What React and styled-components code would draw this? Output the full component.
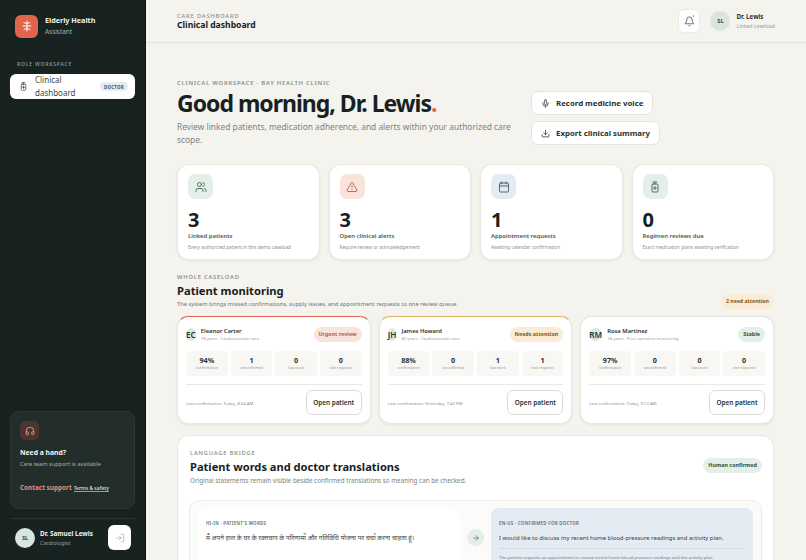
import styled, { createGlobalStyle } from 'styled-components'
import { ArrowRight, Bell, Calendar, Download, Headphones, LogIn, Mic, TriangleAlert, Users } from 'lucide-react'

const GlobalStyle = createGlobalStyle`
    html, body {
        margin: 0;
        height: 100%;
        overflow: hidden;
        background: #f5f3ee;
    }
    * {
        box-sizing: border-box;
    }
    body {
        font-family: "Noto Sans", "Open Sans", sans-serif;
        color: #17211f;
    }
`

const Shell = styled.div`
    display: flex;
    width: 806px;
    height: 560px;
    overflow: hidden;
`

const Sidebar = styled.aside`
    flex: 0 0 146px;
    height: 560px;
    background: #182220;
    border-right: 1px solid #0f1514;
    display: flex;
    flex-direction: column;
    padding: 14px 10px 0;
`

const Brand = styled.div`
    display: flex;
    align-items: center;
    gap: 7px;
    padding-left: 5px;
    height: 24px;
`

const BrandMark = styled.div`
    width: 23px;
    height: 23px;
    border-radius: 6px;
    background: #e0654a;
    display: flex;
    align-items: center;
    justify-content: center;
`

const BrandName = styled.div`
    font-size: 7.2px;
    font-weight: 700;
    line-height: 11px;
    color: #f5f3ee;
`

const BrandSub = styled.div`
    font-size: 6.4px;
    line-height: 11px;
    color: #a4aeab;
`

const NavLabel = styled.div`
    margin: 22px 0 0 7px;
    font-size: 5px;
    font-weight: 600;
    letter-spacing: 0.8px;
    line-height: 8px;
    color: #87928f;
`

const NavItem = styled.div`
    margin-top: 6px;
    height: 25px;
    background: #fff;
    border-radius: 6px;
    display: flex;
    align-items: center;
    padding: 0 7px 0 9px;
    color: #3b4644;
`

const NavText = styled.span`
    margin-left: 7px;
    width: 55px;
    font-size: 8px;
    line-height: 12.4px;
`

const RoleTag = styled.span`
    margin-left: auto;
    background: #e4ebf2;
    border-radius: 5px;
    padding: 1.500px 4px;
    font-size: 4.4px;
    font-weight: 700;
    letter-spacing: 0.3px;
    line-height: 6px;
    color: #3c5168;
`

const SupportCard = styled.div`
    margin-top: auto;
    height: 98px;
    background: #232e2b;
    border: 1px solid #2c3734;
    border-radius: 9px;
    padding: 9px 9px 0;
`

const SupportIcon = styled.div`
    width: 19px;
    height: 19px;
    border-radius: 5px;
    background: #4b3530;
    display: flex;
    align-items: center;
    justify-content: center;
    color: #e9a18f;
`

const SupportTitle = styled.div`
    margin-top: 7px;
    font-size: 6.8px;
    font-weight: 700;
    line-height: 11px;
    color: #f5f3ee;
`

const SupportText = styled.div`
    margin-top: 2px;
    font-size: 5.7px;
    line-height: 9px;
    color: #a4aeab;
`

const SupportLinks = styled.div`
    margin-top: 14px;
    display: flex;
    align-items: baseline;
    gap: 2px;
    white-space: nowrap;
`

const ContactLink = styled.span`
    font-size: 6.4px;
    font-weight: 700;
    color: #ee8a72;
`

const TermsLink = styled.span`
    font-size: 4.900px;
    font-weight: 600;
    color: #cfdad5;
    border-bottom: 1px solid #8fa39c;
`

const ProfileRow = styled.div`
    margin-top: 9px;
    border-top: 1px solid #2a3532;
    flex: 0 0 42px;
    display: flex;
    align-items: center;
    padding: 0 4px 4px 5px;
    gap: 5px;
`

const Avatar = styled.div`
    flex: 0 0 auto;
    width: ${(props) => props.$size}px;
    height: ${(props) => props.$size}px;
    border-radius: 50%;
    background: #d9e6de;
    color: #2c4a3f;
    display: flex;
    align-items: center;
    justify-content: center;
    font-size: 5.6px;
    font-weight: 700;
`

const ProfileText = styled.div`
    flex: 1;
    min-width: 0;
    white-space: nowrap;
`

const ProfileName = styled.div`
    font-size: 6.4px;
    font-weight: 700;
    line-height: 10px;
    color: #f5f3ee;
`

const ProfileRole = styled.div`
    font-size: 5.4px;
    line-height: 8px;
    color: #94a09c;
`

const SignOut = styled.div`
    flex: 0 0 23px;
    height: 25px;
    border-radius: 6px;
    background: #fff;
    color: #9aa5a1;
    display: flex;
    align-items: center;
    justify-content: center;
`

const Main = styled.main`
    flex: 1;
    min-width: 0;
    height: 560px;
    overflow: hidden;
`

const TopBar = styled.header`
    height: 43px;
    border-bottom: 1px solid #e2e1dc;
    display: flex;
    align-items: center;
    padding: 0 31px 0 31px;
`

const TopTitles = styled.div`
    flex: 1;
`

const TopEyebrow = styled.div`
    font-size: 5.8px;
    font-weight: 500;
    letter-spacing: 0.8px;
    line-height: 8px;
    color: #87908d;
`

const TopTitle = styled.div`
    font-size: 8.6px;
    font-weight: 700;
    line-height: 11px;
    color: #17211f;
`

const BellButton = styled.div`
    position: relative;
    width: 22px;
    height: 24px;
    border-radius: 6px;
    background: #fff;
    border: 1px solid #ecebe6;
    display: flex;
    align-items: center;
    justify-content: center;
    margin-right: 10px;
    color: #33403d;
`

const BellDot = styled.span`
    position: absolute;
    top: 5px;
    right: 5px;
    width: 1.500px;
    height: 1.500px;
    border-radius: 50%;
    background: #8a9290;
`

const TopUser = styled.div`
    display: flex;
    align-items: center;
    gap: 6px;
`

const TopUserName = styled.div`
    font-size: 6.2px;
    font-weight: 700;
    line-height: 10px;
    color: #27322f;
`

const TopUserSub = styled.div`
    font-size: 5.15px;
    line-height: 8px;
    color: #959e9b;
    white-space: nowrap;
`

const Content = styled.div`
    padding: 36px 32px 0 31px;
`

const Hero = styled.section`
    display: flex;
`

const HeroText = styled.div`
    flex: 0 0 354px;
`

const HeroEyebrow = styled.div`
    font-size: 5.9px;
    font-weight: 600;
    letter-spacing: 0.75px;
    line-height: 9px;
    color: #87908d;
`

const HeroTitle = styled.h1`
    margin: 0;
    font-size: 23px;
    font-weight: 700;
    letter-spacing: -1px;
    line-height: 30px;
    color: #17211f;
`

const HeroDot = styled.span`
    color: #e0654a;
`

const HeroLead = styled.p`
    margin: 2px 0 0;
    font-size: 8.4px;
    line-height: 13.2px;
    color: #7b8380;
`

const HeroActions = styled.div`
    margin-top: 12px;
    display: flex;
    flex-direction: column;
    align-items: flex-start;
    gap: 6px;
`

const ActionButton = styled.div`
    height: 24px;
    background: #fff;
    border: 1px solid #e5e3dd;
    border-radius: 7px;
    padding: 0 9px;
    display: flex;
    align-items: center;
    gap: 6px;
    font-size: 7.85px;
    font-weight: 700;
    color: #27322f;
    white-space: nowrap;
`

const StatGrid = styled.section`
    margin-top: 18px;
    display: grid;
    grid-template-columns: repeat(4, 1fr);
    gap: 9px;
`

const StatCard = styled.div`
    height: 96px;
    background: #fff;
    border: 1px solid #ebe9e4;
    border-radius: 12px;
    box-shadow: 0 1px 3px rgba(40, 40, 30, 0.08);
    padding: 9px 10px 0;
`

const StatIcon = styled.div`
    width: 25px;
    height: 25px;
    border-radius: 7px;
    background: ${(props) => props.$bg};
    color: ${(props) => props.$fg};
    display: flex;
    align-items: center;
    justify-content: center;
`

const StatValue = styled.div`
    margin-top: 9px;
    font-size: 20px;
    font-weight: 700;
    line-height: 24px;
    color: #17211f;
`

const StatLabel = styled.div`
    font-size: 5.900px;
    font-weight: 600;
    line-height: 9px;
    color: #4b5552;
`

const StatHint = styled.div`
    margin-top: 2px;
    font-size: 4.700px;
    line-height: 8px;
    color: #8a9290;
    white-space: nowrap;
`

const SectionHead = styled.section`
    margin-top: 13px;
    display: flex;
    align-items: flex-end;
    justify-content: space-between;
`

const SectionEyebrow = styled.div`
    font-size: 5.8px;
    font-weight: 500;
    letter-spacing: 0.8px;
    line-height: 8px;
    color: #7e8784;
`

const SectionTitle = styled.h2`
    margin: 2px 0 0;
    font-size: 11.2px;
    font-weight: 700;
    line-height: 16px;
    color: #17211f;
`

const SectionText = styled.div`
    font-size: 5.75px;
    line-height: 10px;
    color: #6e7774;
`

const Pill = styled.span`
    display: inline-block;
    padding: 0 5px;
    height: 15px;
    line-height: 15px;
    border-radius: 8px;
    background: ${(props) => props.$bg};
    color: ${(props) => props.$fg};
    font-size: ${(props) => props.$size || 5.4}px;
    font-weight: 700;
    white-space: nowrap;
`

const BridgePill = styled(Pill)`
    margin-top: 9px;
`

const PatientGrid = styled.section`
    margin-top: 7px;
    display: grid;
    grid-template-columns: repeat(3, 1fr);
    gap: 8px;
`

const PatientCard = styled.article`
    height: 108px;
    background: #fff;
    border: 1px solid #e9e7e2;
    border-top: 1px solid ${(props) => props.$accent};
    border-radius: 11px;
    box-shadow: 0 1px 3px rgba(40, 40, 30, 0.08);
    padding: 10px 8px 0;
`

const PatientHead = styled.div`
    display: flex;
    align-items: center;
    height: 15px;
    margin-bottom: 9px;
`

const Initials = styled.div`
    flex: 0 0 auto;
    height: 13px;
    border-radius: 50%;
    background: #dbe8e0;
    color: #1f3a31;
    font-size: 8.2px;
    font-weight: 600;
    line-height: 13px;
    text-align: center;
    margin-right: 5px;
`

const PatientInfo = styled.div`
    flex: 1;
    min-width: 0;
    white-space: nowrap;
`

const PatientName = styled.div`
    font-size: 5.8px;
    font-weight: 600;
    line-height: 8px;
    color: #27322f;
`

const PatientMeta = styled.div`
    font-size: 4.2px;
    line-height: 8px;
    color: #959e9b;
`

const MetricRow = styled.div`
    display: grid;
    grid-template-columns: repeat(4, 1fr);
    gap: 3px;
`

const Metric = styled.div`
    height: 25px;
    background: #f8f7f4;
    border-radius: 4px;
    text-align: center;
    padding-top: 4px;
`

const MetricValue = styled.div`
    font-size: 7.2px;
    font-weight: 700;
    line-height: 10px;
    color: #27322f;
`

const MetricLabel = styled.div`
    font-size: 3.7px;
    line-height: 6px;
    color: #8f9795;
`

const PatientFoot = styled.div`
    margin-top: 8px;
    padding-top: 5px;
    border-top: 1px solid #e9e8e3;
    display: flex;
    align-items: center;
    justify-content: space-between;
`

const LastSeen = styled.span`
    font-size: 4.25px;
    color: #8a9290;
    white-space: nowrap;
`

const OpenButton = styled.div`
    width: 56px;
    height: 25px;
    border: 1px solid #dcdcd6;
    border-radius: 6px;
    background: #fff;
    display: flex;
    align-items: center;
    justify-content: center;
    font-size: 6.4px;
    font-weight: 600;
    color: #27322f;
`

const BridgeCard = styled.section`
    margin-top: 11px;
    height: 180px;
    background: #fff;
    border: 1px solid #e9e7e2;
    border-radius: 12px;
    padding: 13px 11px 0;
`

const BridgeHead = styled.div`
    display: flex;
    align-items: flex-start;
    justify-content: space-between;
    padding-left: 1px;
`

const BridgeTitle = styled.h2`
    margin: 2px 0 0;
    font-size: 11.1px;
    font-weight: 700;
    line-height: 16px;
    color: #17211f;
`

const BridgeText = styled.div`
    margin-top: 1px;
    font-size: 6.3px;
    line-height: 10px;
    color: #7b8380;
`

const BridgeRow = styled.div`
    margin-top: 14px;
    height: 110px;
    background: #fbfbf9;
    border: 1px solid #ecebe6;
    border-radius: 10px;
    padding: 7px 8px;
    display: grid;
    grid-template-columns: 1fr 31px 1fr;
`

const WordsPanel = styled.div`
    background: ${(props) => props.$bg};
    border-radius: 8px;
    padding: 12px 8px 0;
`

const WordsLabel = styled.div`
    font-size: 4.4px;
    font-weight: 600;
    letter-spacing: 0.3px;
    line-height: 6px;
    color: #5a6a78;
`

const OriginalText = styled.div`
    margin-top: 4.500px;
    font-family: "Noto Sans", "Lohit Devanagari", "DejaVu Sans", sans-serif;
    font-size: 6.5px;
    line-height: 14px;
    color: #3b4644;
    white-space: nowrap;
`

const TranslatedText = styled.div`
    margin-top: 6px;
    font-size: 5.9px;
    line-height: 12px;
    color: #33403d;
    white-space: nowrap;
`

const SummaryText = styled.div`
    margin-top: 3.500px;
    padding-top: 4.500px;
    border-top: 1px solid #d3dce5;
    font-size: 4.3px;
    line-height: 8px;
    color: #6c7986;
    white-space: nowrap;
`

const ArrowCell = styled.div`
    display: flex;
    align-items: flex-start;
    justify-content: center;
    padding-top: 21px;
`

const ArrowBadge = styled.div`
    width: 17px;
    height: 17px;
    border-radius: 50%;
    background: #e6eee9;
    color: #47665a;
    display: flex;
    align-items: center;
    justify-content: center;
`

function LogoMark() {
    return (
        <svg width='12' height='12' viewBox='0 0 24 24' fill='none' stroke='#fff' strokeWidth='2' strokeLinecap='round'>
            <path d='M12 2v20' />
            <path d='M4 12h16' />
            <path d='M6 5.500c2 1.600 10 1.600 12 0' />
            <path d='M6 18.500c2-1.600 10-1.600 12 0' />
        </svg>
    )
}

function MedBottle({ size, strokeWidth }) {
    return (
        <svg width={size} height={size} viewBox='0 0 24 24' fill='none' stroke='currentColor' strokeWidth={strokeWidth} strokeLinecap='round' strokeLinejoin='round'>
            <path d='M8 2h8' />
            <path d='M12 2v4' />
            <rect x='6' y='6' width='12' height='16' rx='2' />
            <path d='M12 11v6' />
            <path d='M9 14h6' />
        </svg>
    )
}

const stats = [
    { value: 3, label: 'Linked patients', hint: 'Every authorized patient in this demo caseload', bg: '#e5eee8', fg: '#3f6555', Icon: Users },
    { value: 3, label: 'Open clinical alerts', hint: 'Require review or acknowledgement', bg: '#f9e3db', fg: '#b9604c', Icon: TriangleAlert },
    { value: 1, label: 'Appointment requests', hint: 'Awaiting calendar confirmation', bg: '#e4ebf2', fg: '#3f5a72', Icon: Calendar },
    { value: 0, label: 'Regimen reviews due', hint: 'Exact medication plans awaiting verification', bg: '#e5eee8', fg: '#3f6555', Icon: MedBottle },
]

const patients = [
    {
        initials: 'EC',
        name: 'Eleanor Carter',
        meta: '78 years · Cardiovascular care',
        status: 'Urgent review',
        statusBg: '#f9e3db',
        statusFg: '#b9604c',
        accent: '#e0654a',
        metrics: ['94%', 1, 0, 0],
        last: 'Last confirmation: Today, 8:04 AM',
    },
    {
        initials: 'JH',
        name: 'James Howard',
        meta: '82 years · Cardiovascular care',
        status: 'Needs attention',
        statusBg: '#faebd5',
        statusFg: '#7d5a24',
        accent: '#e8b060',
        metrics: ['88%', 0, 1, 1],
        last: 'Last confirmation: Yesterday, 7:42 PM',
    },
    {
        initials: 'RM',
        name: 'Rosa Martinez',
        meta: '74 years · Post-operative monitoring',
        status: 'Stable',
        statusBg: '#e5eee8',
        statusFg: '#2f5445',
        accent: '#dfe6e1',
        metrics: ['97%', 0, 0, 0],
        last: 'Last confirmation: Today, 9:12 AM',
    },
]

const metricLabels = ['confirmation', 'unconfirmed', 'low stock', 'visit requests']

function PatientTile({ patient }) {
    return (
        <PatientCard $accent={patient.accent}>
            <PatientHead>
                <Initials>{patient.initials}</Initials>
                <PatientInfo>
                    <PatientName>{patient.name}</PatientName>
                    <PatientMeta>{patient.meta}</PatientMeta>
                </PatientInfo>
                <Pill $bg={patient.statusBg} $fg={patient.statusFg}>
                    {patient.status}
                </Pill>
            </PatientHead>
            <MetricRow>
                {patient.metrics.map((value, i) => (
                    <Metric key={metricLabels[i]}>
                        <MetricValue>{value}</MetricValue>
                        <MetricLabel>{metricLabels[i]}</MetricLabel>
                    </Metric>
                ))}
            </MetricRow>
            <PatientFoot>
                <LastSeen>{patient.last}</LastSeen>
                <OpenButton>Open patient</OpenButton>
            </PatientFoot>
        </PatientCard>
    )
}

function App() {
    return (
        <Shell>
            <GlobalStyle />
            <Sidebar>
                <Brand>
                    <BrandMark>
                        <LogoMark />
                    </BrandMark>
                    <div>
                        <BrandName>Elderly Health</BrandName>
                        <BrandSub>Assistant</BrandSub>
                    </div>
                </Brand>
                <NavLabel>ROLE WORKSPACE</NavLabel>
                <NavItem>
                    <MedBottle size={9} strokeWidth={2} />
                    <NavText>Clinical dashboard</NavText>
                    <RoleTag>DOCTOR</RoleTag>
                </NavItem>
                <SupportCard>
                    <SupportIcon>
                        <Headphones size={10} strokeWidth={2} />
                    </SupportIcon>
                    <SupportTitle>Need a hand?</SupportTitle>
                    <SupportText>Care team support is available</SupportText>
                    <SupportLinks>
                        <ContactLink>Contact support</ContactLink>
                        <TermsLink>Terms &amp; safety</TermsLink>
                    </SupportLinks>
                </SupportCard>
                <ProfileRow>
                    <Avatar $size={20}>SL</Avatar>
                    <ProfileText>
                        <ProfileName>Dr. Samuel Lewis</ProfileName>
                        <ProfileRole>Cardiologist</ProfileRole>
                    </ProfileText>
                    <SignOut>
                        <LogIn size={10} strokeWidth={1.6} />
                    </SignOut>
                </ProfileRow>
            </Sidebar>
            <Main>
                <TopBar>
                    <TopTitles>
                        <TopEyebrow>CARE DASHBOARD</TopEyebrow>
                        <TopTitle>Clinical dashboard</TopTitle>
                    </TopTitles>
                    <BellButton>
                        <Bell size={11} strokeWidth={1.6} />
                        <BellDot />
                    </BellButton>
                    <TopUser>
                        <Avatar $size={20}>SL</Avatar>
                        <div>
                            <TopUserName>Dr. Lewis</TopUserName>
                            <TopUserSub>Linked caseload</TopUserSub>
                        </div>
                    </TopUser>
                </TopBar>
                <Content>
                    <Hero>
                        <HeroText>
                            <HeroEyebrow>CLINICAL WORKSPACE · BAY HEALTH CLINIC</HeroEyebrow>
                            <HeroTitle>
                                Good morning, Dr. Lewis<HeroDot>.</HeroDot>
                            </HeroTitle>
                            <HeroLead>Review linked patients, medication adherence, and alerts within your authorized care scope.</HeroLead>
                        </HeroText>
                        <HeroActions>
                            <ActionButton>
                                <Mic size={9} strokeWidth={2} />
                                Record medicine voice
                            </ActionButton>
                            <ActionButton>
                                <Download size={9} strokeWidth={2} />
                                Export clinical summary
                            </ActionButton>
                        </HeroActions>
                    </Hero>
                    <StatGrid>
                        {stats.map(({ value, label, hint, bg, fg, Icon }) => (
                            <StatCard key={label}>
                                <StatIcon $bg={bg} $fg={fg}>
                                    <Icon size={12} strokeWidth={1.8} />
                                </StatIcon>
                                <StatValue>{value}</StatValue>
                                <StatLabel>{label}</StatLabel>
                                <StatHint>{hint}</StatHint>
                            </StatCard>
                        ))}
                    </StatGrid>
                    <SectionHead>
                        <div>
                            <SectionEyebrow>WHOLE CASELOAD</SectionEyebrow>
                            <SectionTitle>Patient monitoring</SectionTitle>
                            <SectionText>The system brings missed confirmations, supply issues, and appointment requests to one review queue.</SectionText>
                        </div>
                        <Pill $bg='#faebd5' $fg='#7d5a24' $size={5.2}>
                            2 need attention
                        </Pill>
                    </SectionHead>
                    <PatientGrid>
                        {patients.map((patient) => (
                            <PatientTile key={patient.initials} patient={patient} />
                        ))}
                    </PatientGrid>
                    <BridgeCard>
                        <BridgeHead>
                            <div>
                                <SectionEyebrow>LANGUAGE BRIDGE</SectionEyebrow>
                                <BridgeTitle>Patient words and doctor translations</BridgeTitle>
                                <BridgeText>Original statements remain visible beside confirmed translations so meaning can be checked.</BridgeText>
                            </div>
                            <BridgePill $bg='#e5eee8' $fg='#2f5445'>
                                Human confirmed
                            </BridgePill>
                        </BridgeHead>
                        <BridgeRow>
                            <WordsPanel $bg='#fff'>
                                <WordsLabel>HI-IN · PATIENT'S WORDS</WordsLabel>
                                <OriginalText>मैं अपने हाल के घर के रक्तचाप के परिणामों और गतिविधि योजना पर चर्चा करना चाहता हूं।</OriginalText>
                            </WordsPanel>
                            <ArrowCell>
                                <ArrowBadge>
                                    <ArrowRight size={8} strokeWidth={2} />
                                </ArrowBadge>
                            </ArrowCell>
                            <WordsPanel $bg='#e4ebf2'>
                                <WordsLabel>EN-US · CONFIRMED FOR DOCTOR</WordsLabel>
                                <TranslatedText>I would like to discuss my recent home blood-pressure readings and activity plan.</TranslatedText>
                                <SummaryText>The patient requests an appointment to review recent home blood-pressure readings and the activity plan.</SummaryText>
                            </WordsPanel>
                        </BridgeRow>
                    </BridgeCard>
                </Content>
            </Main>
        </Shell>
    )
}

export default App
